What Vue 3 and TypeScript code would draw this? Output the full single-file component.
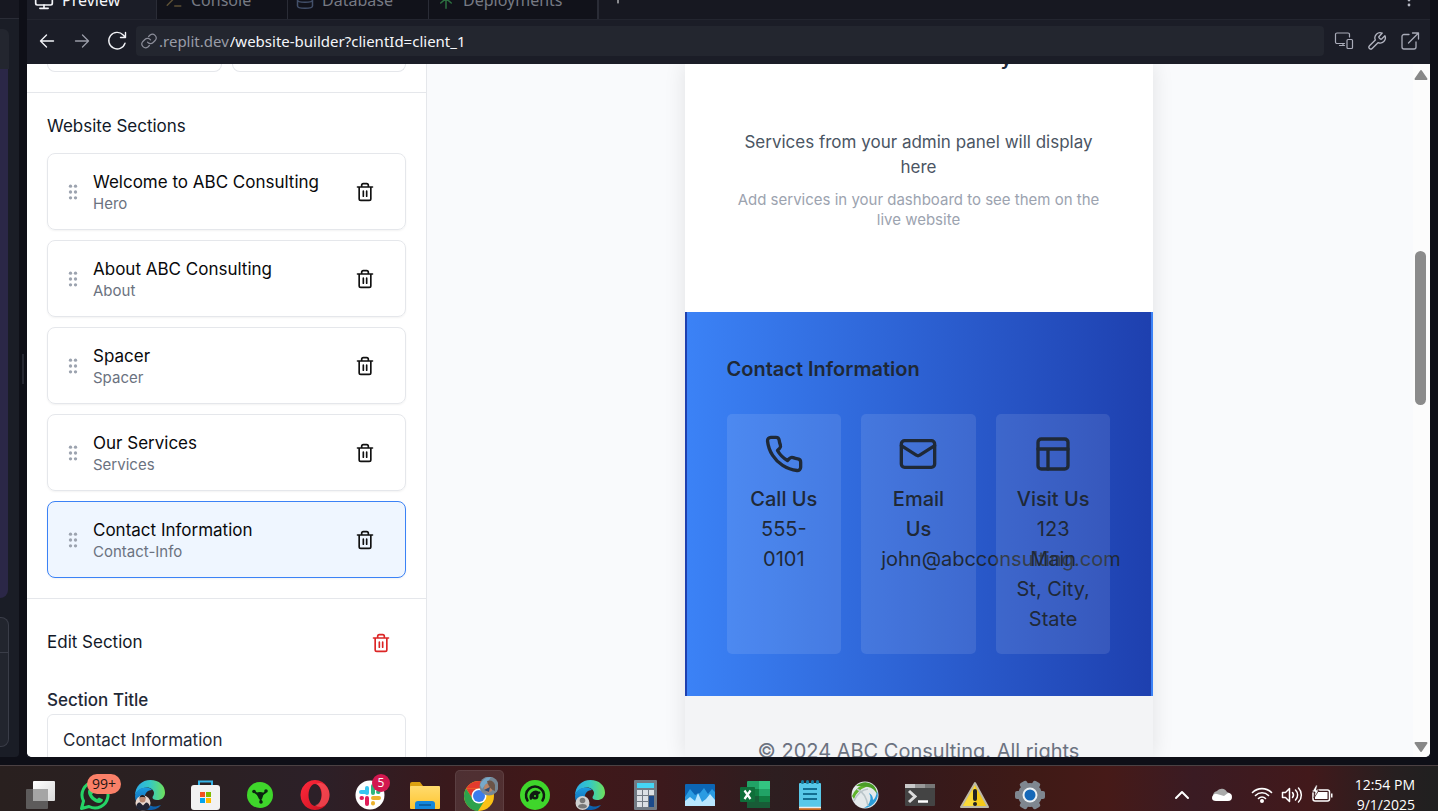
<script setup lang="ts">
import { ref } from 'vue'

interface Section {
  title: string
  kind: string
}

const sections: Section[] = [
  { title: 'Welcome to ABC Consulting', kind: 'Hero' },
  { title: 'About ABC Consulting', kind: 'About' },
  { title: 'Spacer', kind: 'Spacer' },
  { title: 'Our Services', kind: 'Services' },
  { title: 'Contact Information', kind: 'Contact-Info' },
]
const selected = ref(4)
const path = ref('/website-builder?clientId=client_1')
const sectionTitle = ref('Contact Information')
</script>

<template>
  <div class="desktop">
    <div class="workspace">
      <aside class="rail">
        <div class="rail-top"></div>
        <div class="rail-body">
          <div class="rail-head"></div>
          <div class="rail-chat"></div>
          <div class="rail-box"><div class="rail-line"></div></div>
        </div>
      </aside>
      <div class="gutter"><div class="handle"></div></div>

      <main class="pane">
        <nav class="tabs">
          <button class="tab active">
            <svg width="20" height="20" viewBox="0 0 24 24" class="ln"><rect x="2" y="3" width="20" height="15" rx="2" /><path d="M12 18v4M7 22h10" /></svg>
            Preview
          </button>
          <button class="tab console">
            <svg width="18" height="18" viewBox="0 0 24 24" class="ln" stroke="#5d5035"><path d="M3 19l7-7-7-7M13 20h8" /></svg>
            Console
          </button>
          <button class="tab database">
            <svg width="18" height="18" viewBox="0 0 24 24" class="ln" stroke="#43506a"><ellipse cx="12" cy="5" rx="10" ry="3" /><path d="M2 5v15c0 4 20 4 20 0V5M2 12c0 4 20 4 20 0" /></svg>
            Database
          </button>
          <button class="tab deploy">
            <svg width="18" height="18" viewBox="0 0 24 24" class="ln" stroke="#2d7040"><path d="M12 23V10M5 16l7-6 7 6M6 11l6-6 6 6" /></svg>
            Deployments
          </button>
          <button class="tab add" aria-label="New tab">
            <svg width="14" height="14" viewBox="0 0 14 14" class="ln" stroke="#fff" stroke-width="1"><path d="M7 1v12M1 7h12" /></svg>
          </button>
          <button class="more" aria-label="More">
            <svg width="6" height="18" viewBox="0 0 6 18"><g fill="#b8bac4"><circle cx="3" cy="4" r="1.4" /><circle cx="3" cy="9" r="1.4" /><circle cx="3" cy="14" r="1.4" /></g></svg>
          </button>
        </nav>

        <div class="toolbar">
          <button class="tool" aria-label="Back"><svg width="20" height="20" viewBox="0 0 20 20" class="ln" stroke="#f2f3f7" stroke-width="1.4"><path d="M16.500 10h-13M9.500 4L3.500 10l6 6" /></svg></button>
          <button class="tool" aria-label="Forward"><svg width="20" height="20" viewBox="0 0 20 20" class="ln" stroke="#9a9ca8" stroke-width="1.300"><path d="M3.500 10h13M10.500 4l6 6-6 6" /></svg></button>
          <button class="tool" aria-label="Reload"><svg width="22" height="22" viewBox="0 0 22 22" class="ln" stroke="#f2f3f7" stroke-width="1.400"><path d="M19 13.200a8.300 8.300 0 1 1-1.800-8.200l2.300 2.500M19.500 2.500v5h-5" /></svg></button>
          <div class="url">
            <svg width="18" height="18" viewBox="0 0 24 24" class="ln" stroke="#8c8e9a" stroke-width="1.600"><path d="M10 13.500a5 5 0 0 0 7.500.5l3-3a5 5 0 0 0-7-7l-2 2M14 10.500a5 5 0 0 0-7.500-.5l-3 3a5 5 0 0 0 7 7l2-2" /></svg>
            <span class="host">.replit.dev</span>
            <input v-model="path" class="path" aria-label="Path" />
          </div>
          <button class="tool" aria-label="Devices"><svg width="20" height="20" viewBox="0 0 20 20" class="ln" stroke="#a9abb8" stroke-width="1.200"><path d="M10.500 12.500H3a1.500 1.500 0 0 1-1.500-1.500V3.500A1.500 1.500 0 0 1 3 2h11a1.500 1.500 0 0 1 1.500 1.500V6M9 12.500v2M5.500 14.500h5" /><rect x="13" y="8.500" width="5.500" height="9" rx="1" /></svg></button>
          <button class="tool" aria-label="Tools"><svg width="20" height="20" viewBox="0 0 24 24" class="ln" stroke="#b4b6c2" stroke-width="1.600"><path d="M14.500 6.500a1.200 1.200 0 0 0 0 1.600l1.500 1.500a1.200 1.200 0 0 0 1.600 0l3.900-3.900a6.300 6.300 0 0 1-8.300 8.300l-7 7a2.200 2.200 0 0 1-3.200-3.200l7-7a6.300 6.300 0 0 1 8.300-8.300z" /></svg></button>
          <button class="tool" aria-label="Open in new tab"><svg width="20" height="20" viewBox="0 0 20 20" class="ln" stroke="#a9abb8" stroke-width="1.300"><path d="M9 3.500H4a2 2 0 0 0-2 2V16a2 2 0 0 0 2 2h10a2 2 0 0 0 2-2v-5M12.500 2h6v6M18.500 2L8.500 12" /></svg></button>
        </div>

        <div class="page">
          <aside class="sidebar">
            <div class="stubs"><div></div><div></div></div>
            <section class="block">
              <h3>Website Sections</h3>
              <ul>
                <li v-for="(s, i) in sections" :key="s.title" class="card" :class="{ on: i === selected }" @click="selected = i">
                  <svg width="20" height="20" viewBox="0 0 24 24" fill="#9ca3af"><g v-for="y in [5, 12, 19]" :key="y"><circle cx="9" :cy="y" r="2" /><circle cx="15" :cy="y" r="2" /></g></svg>
                  <div class="meta">
                    <div class="title">{{ s.title }}</div>
                    <div class="kind">{{ s.kind }}</div>
                  </div>
                  <button class="del" aria-label="Delete section"><svg width="20" height="20" viewBox="0 0 24 24" class="ln"><path d="M3 6h18M19 6v14a2 2 0 0 1-2 2H7a2 2 0 0 1-2-2V6M8 6V4a2 2 0 0 1 2-2h4a2 2 0 0 1 2 2v2M10 11v6M14 11v6" /></svg></button>
                </li>
              </ul>
            </section>
            <section class="block edit">
              <div class="edit-head">
                <h3>Edit Section</h3>
                <button class="del red" aria-label="Delete selected section"><svg width="20" height="20" viewBox="0 0 24 24" class="ln"><path d="M3 6h18M19 6v14a2 2 0 0 1-2 2H7a2 2 0 0 1-2-2V6M8 6V4a2 2 0 0 1 2-2h4a2 2 0 0 1 2 2v2M10 11v6M14 11v6" /></svg></button>
              </div>
              <label for="section-title">Section Title</label>
              <input id="section-title" v-model="sectionTitle" class="field" />
            </section>
          </aside>

          <div class="canvas">
            <div class="site">
              <section class="services">
                <div class="tail"><h2>y</h2></div>
                <p class="lead">Services from your admin panel will display here</p>
                <p class="note">Add services in your dashboard to see them on the live website</p>
              </section>
              <section class="contact">
                <h3>Contact Information</h3>
                <div class="grid">
                  <div class="info">
                    <svg width="40" height="40" viewBox="0 0 24 24" class="ln"><path d="M22 16.920v3a2 2 0 0 1-2.180 2 19.790 19.790 0 0 1-8.630-3.070 19.500 19.500 0 0 1-6-6 19.790 19.790 0 0 1-3.070-8.670A2 2 0 0 1 4.110 2h3a2 2 0 0 1 2 1.720 12.840 12.840 0 0 0 .7 2.810 2 2 0 0 1-.45 2.110L8.090 9.910a16 16 0 0 0 6 6l1.270-1.270a2 2 0 0 1 2.110-.45 12.840 12.840 0 0 0 2.810.7A2 2 0 0 1 22 16.920z" /></svg>
                    <h4>Call Us</h4>
                    <p>555-0101</p>
                  </div>
                  <div class="info">
                    <svg width="40" height="40" viewBox="0 0 24 24" class="ln"><rect x="2" y="4" width="20" height="16" rx="2" /><path d="M22 7l-8.970 5.700a1.940 1.940 0 0 1-2.060 0L2 7" /></svg>
                    <h4>Email Us</h4>
                    <p>john@abcconsulting.com</p>
                  </div>
                  <div class="info">
                    <svg width="40" height="40" viewBox="0 0 24 24" class="ln"><rect x="3" y="3" width="18" height="18" rx="2" /><path d="M3 9h18M9 21V9" /></svg>
                    <h4>Visit Us</h4>
                    <p>123 Main St, City, State</p>
                  </div>
                </div>
              </section>
              <footer>© 2024 ABC Consulting. All rights reserved.</footer>
            </div>
          </div>

          <div class="scroll">
            <svg width="14" height="12" viewBox="0 0 14 12"><path d="M7 2L12.500 10h-11z" fill="#888" stroke="#888" stroke-width="2" stroke-linejoin="round" /></svg>
            <div class="thumb"></div>
            <svg width="14" height="12" viewBox="0 0 14 12"><path d="M7 10L12.500 2h-11z" fill="#888" stroke="#888" stroke-width="2" stroke-linejoin="round" /></svg>
          </div>
        </div>
      </main>
    </div>

    <footer class="taskbar">
      <svg width="0" height="0" class="defs">
        <defs>
          <linearGradient id="edgeA" x1="0" y1="0" x2="1" y2="0"><stop offset="0" stop-color="#2aa9e8" /><stop offset=".5" stop-color="#35c9c4" /><stop offset="1" stop-color="#6ee05a" /></linearGradient>
          <linearGradient id="edgeB" x1="0" y1="0" x2="0" y2="1"><stop offset="0" stop-color="#1b9be0" /><stop offset="1" stop-color="#0c59a4" /></linearGradient>
          <linearGradient id="opera" x1="0" y1="0" x2="1" y2="1"><stop offset="0" stop-color="#ff2a3c" /><stop offset="1" stop-color="#c8101f" /></linearGradient>
          <linearGradient id="folder" x1="0" y1="0" x2="0" y2="1"><stop offset="0" stop-color="#ffdb6e" /><stop offset="1" stop-color="#ffc52f" /></linearGradient>
          <linearGradient id="pane" x1="0" y1="0" x2="1" y2="1"><stop offset="0" stop-color="#fff" /><stop offset="1" stop-color="#d8d8d8" /></linearGradient>
        </defs>
      </svg>
      <div class="apps">
        <button class="app" aria-label="Task view"><svg width="32" height="32" viewBox="0 0 32 32"><rect x="9" y="2" width="22" height="20" rx="1" fill="url(#pane)" /><rect x="2" y="10" width="22" height="20" rx="1" fill="#666" opacity=".85" /><rect x="9" y="10" width="15" height="12" fill="#a5a5a5" /></svg></button>
        <button class="app" aria-label="WhatsApp"><svg width="32" height="32" viewBox="0 0 32 32"><path d="M2.500 29.500l2-7.500A13 13 0 1 1 10 27.500z" fill="none" stroke="#25d366" stroke-width="3" stroke-linejoin="round" /><path d="M12 9l2.500 4.500-1.500 2q2 3.500 5 4.500l2-1.500 4 2c0 2-2 3.500-4 3.500-5 0-11-6-11-11 0-2 1-4 3-4z" fill="#25d366" /></svg><span class="badge">99+</span></button>
        <button class="app" aria-label="Edge"><svg width="32" height="32" viewBox="0 0 32 32"><path d="M1 17C1 7 8 1 16.500 1 25 1 31 6.500 31 13.500c0 5-3.500 7.500-8 7.500-3 0-4.500-1-4.500-2.500s1.500-2 1.500-4.500c0-3-3-5.500-7-5.500-6 0-11 4-12 8.500z" fill="url(#edgeA)" /><path d="M1 17c1-5 5-8.500 11-8.500 3 0 5 1 6 2.500-5 0-8 4-7 9 1 5 6 8 11 7.500l5-1.500c-3 4-7 5-11 5C7 31 1 25 1 17z" fill="url(#edgeB)" /><circle cx="9" cy="24" r="7.500" fill="#e8d7ce" /><circle cx="8.500" cy="20.500" r="3" fill="#b98870" /><path d="M5.500 20q0-4 3-4t3 4l-1-2h-4z" fill="#201b1c" /><path d="M2 28q1-5 4-4.500l3 3 3-3q3 0 4 4.500-3 4-7 3.500-5 0-7-3.500z" fill="#222433" /></svg></button>
        <button class="app" aria-label="Store"><svg width="32" height="32" viewBox="0 0 32 32"><path d="M10 7V2.500h13V7" fill="none" stroke="#35b4e8" stroke-width="2" /><rect x="2" y="6" width="29" height="25" rx="3" fill="#f2f2f2" /><rect x="11" y="13" width="5" height="5" fill="#f25022" /><rect x="17" y="13" width="5" height="5" fill="#7fba00" /><rect x="11" y="19" width="5" height="5" fill="#00a4ef" /><rect x="17" y="19" width="5" height="5" fill="#ffb900" /></svg></button>
        <button class="app" aria-label="Monitor"><svg width="32" height="32" viewBox="0 0 32 32"><circle cx="16" cy="16" r="13" fill="#3fd62b" /><path d="M16 17L10 12.500M16 17l6-4M16 17l1 6" stroke="#0b2410" stroke-width="2" /><path d="M12 14q4-2 8 0l-2 6h-3z" fill="#0b2410" /><circle cx="10" cy="12.500" r="1.800" fill="#0b2410" /><circle cx="22" cy="12" r="1.800" fill="#0b2410" /><circle cx="17" cy="23" r="1.800" fill="#0b2410" /></svg></button>
        <button class="app" aria-label="Opera"><svg width="32" height="32" viewBox="0 0 32 32"><path d="M16 1a14.500 15 0 1 0 .01 0zM16 5a6.500 11 0 1 1-.01 0z" fill="url(#opera)" fill-rule="evenodd" /><path d="M17 5c4-2 10-1 13 7 2 8-2 15-8 16-3 0-5-1-6-2 8-1 10-18 1-21z" fill="#ff6a6d" opacity=".5" /></svg></button>
        <button class="app" aria-label="Slack"><svg width="32" height="32" viewBox="0 0 32 32"><circle cx="16" cy="16" r="14.500" fill="#fff" /><g stroke-width="4" stroke-linecap="round"><path d="M13 9v5M7 13h6" stroke="#36c5f0" /><path d="M19 7v7M24 13h.5" stroke="#2eb67d" /><path d="M19 19h6M19 24v.5" stroke="#ecb22e" /><path d="M13 19v6M7.500 19H8" stroke="#e01e5a" /></g></svg><span class="badge round">5</span></button>
        <button class="app" aria-label="Files"><svg width="32" height="32" viewBox="0 0 32 32"><path d="M1 5q0-2 2-2h8l3 4v5H1z" fill="#dba111" /><rect x="1" y="7" width="30" height="23" rx="1" fill="url(#folder)" /><path d="M6 30v-5q0-3 3-3h14q3 0 3 3v5z" fill="#1386dc" /><path d="M10 26h12" stroke="#0b5593" stroke-width="1.500" /></svg></button>
        <button class="app current" aria-label="Chrome"><svg width="36" height="36" viewBox="-1 -3 36 36"><circle cx="16" cy="16" r="15" fill="#fbc116" /><path d="M3 8.500A15 15 0 0 1 29 8.500H16z" fill="#e33b2e" /><path d="M3 8.500L9.500 19l6.500-10.500z" fill="#e33b2e" /><path d="M3 8.500A15 15 0 0 0 15 31l6-9.500-11-2z" fill="#2da24c" /><circle cx="16" cy="16" r="7.500" fill="#fff" /><circle cx="16" cy="16" r="6" fill="#3b7ded" /><circle cx="26" cy="6" r="9.500" fill="#768795" /><path d="M17 5q3-8 11-8l-4 6-5 6z" fill="#76a9cb" /><path d="M21 9q0-6 5-5 4 1 3 7l-4 2z" fill="#b98568" /><path d="M24 1q6-2 8 4v6q-6-2-8-10z" fill="#6b5448" /><path d="M21 10l6-3-1 5z" fill="#2c4b77" /></svg></button>
        <button class="app" aria-label="Meter"><svg width="32" height="32" viewBox="0 0 32 32"><circle cx="16" cy="16" r="15" fill="#3fd62b" /><g fill="none" stroke="#101b12" stroke-linecap="round"><path d="M8.500 21.500a9 9 0 1 1 15 0" stroke-width="2.500" /><path d="M12 19.500a5 5 0 0 1 7-6" stroke-width="2.500" /></g><circle cx="16" cy="17" r="3.500" fill="#101b12" /><path d="M16 17l5-4" stroke="#101b12" stroke-width="2" /><circle cx="16" cy="17" r="1" fill="#3fd62b" /></svg></button>
        <button class="app" aria-label="Edge profile"><svg width="32" height="32" viewBox="0 0 32 32"><path d="M1 17C1 7 8 1 16.500 1 25 1 31 6.500 31 13.500c0 5-3.500 7.500-8 7.500-3 0-4.500-1-4.500-2.500s1.500-2 1.500-4.500c0-3-3-5.500-7-5.500-6 0-11 4-12 8.500z" fill="url(#edgeA)" /><path d="M1 17c1-5 5-8.500 11-8.500 3 0 5 1 6 2.500-5 0-8 4-7 9 1 5 6 8 11 7.500l5-1.500c-3 4-7 5-11 5C7 31 1 25 1 17z" fill="url(#edgeB)" /><circle cx="8.500" cy="24" r="7" fill="#d0d0d0" /><circle cx="8.500" cy="21.500" r="2.800" fill="#777" /><path d="M4 28q0-3 4.500-3t4.500 3q-4 3-9 0z" fill="#777" /></svg></button>
        <button class="app" aria-label="Calculator"><svg width="32" height="32" viewBox="0 0 32 32"><rect x="5" y="1" width="23" height="30" rx="1" fill="#727a84" /><rect x="8" y="4" width="17" height="5" fill="#45d5f5" /><g fill="#dce0e5"><rect x="8" y="11" width="5" height="5" /><rect x="14" y="11" width="5" height="5" /><rect x="20" y="11" width="5" height="5" /><rect x="8" y="17" width="5" height="5" /><rect x="14" y="17" width="5" height="5" /><rect x="8" y="23" width="5" height="5" /><rect x="14" y="23" width="5" height="5" /></g><rect x="20" y="17" width="5" height="11" fill="#1b4a8c" /></svg></button>
        <button class="app" aria-label="Performance"><svg width="32" height="32" viewBox="0 0 32 32"><rect x="1" y="5" width="30" height="22" rx="1" fill="#0c66b5" /><path d="M1 18l5-8 5 6 5-2 4-5 4 6 4-5 3 3v14H1z" fill="#2a9be2" /><path d="M1 22l5-4 5 4 3-8 4 9 4-3 4-5 5 6v6H1z" fill="#b9e6ff" /></svg></button>
        <button class="app" aria-label="Excel"><svg width="32" height="32" viewBox="0 0 32 32"><rect x="8" y="2" width="23" height="27" rx="1" fill="#21a366" /><rect x="20" y="2" width="11" height="8" fill="#33c481" /><path d="M8 10h12v7H8z" fill="#107c41" /><path d="M20 17h11v6H20z" fill="#107c41" /><path d="M8 17h12v6h11v6H8z" fill="#185c37" /><rect x="1" y="8" width="15" height="15" rx="1" fill="#0f6f3a" /><path d="M5.500 11.500l6 8.500M11.500 11.500l-6 8.500" stroke="#fff" stroke-width="2.200" /></svg></button>
        <button class="app" aria-label="Notepad"><svg width="32" height="32" viewBox="0 0 32 32"><rect x="5" y="27" width="22" height="4" fill="#c5671d" /><rect x="5" y="4" width="22" height="24" rx="1" fill="#58c8e8" /><path d="M5 28.500h22" stroke="#eee" stroke-width="1.500" /><path d="M9 10h14M9 15h14M9 20h14" stroke="#126e91" stroke-width="2" /><path d="M8.500 2.500v1M13.500 2.500v1M18.500 2.500v1M23.500 2.500v1" stroke="#17799c" stroke-width="3" stroke-linecap="round" /></svg></button>
        <button class="app" aria-label="Globe"><svg width="32" height="32" viewBox="0 0 32 32"><circle cx="16" cy="16" r="13.500" fill="#e4e9eb" /><path d="M3 17Q6 9 15 5.500l3 2Q8 11 5 20z" fill="#5fb32c" /><path d="M7 7q9-7 17-1 4 4 4 9-3-6-9-7-6-1-12-1z" fill="#4a9d27" /><path d="M20 14q4 6-2 13l-3 2q7 0 12-7 3-6 1-10-1 7-4 9 0-5-4-7z" fill="#2b9cd8" /><path d="M5 22q5-11 14-12M8 10q9 4 11 17" fill="none" stroke="#bac5c9" stroke-width="1.500" /></svg></button>
        <button class="app" aria-label="Terminal"><svg width="32" height="32" viewBox="0 0 32 32"><rect x="1" y="5" width="30" height="22" rx="1" fill="#444" /><path d="M1 5h10v4H1z" fill="#c9c9c9" /><path d="M11 5h10v4H11z" fill="#999" /><path d="M21 5h10v4H21z" fill="#777" /><path d="M5 12l6 5.500L5 23" fill="none" stroke="#ddd" stroke-width="3" /><path d="M14 22.500h10" stroke="#fff" stroke-width="2.500" /></svg></button>
        <button class="app" aria-label="Warning"><svg width="32" height="32" viewBox="0 0 32 32"><path d="M16 4l13 24H2z" fill="#f5ca19" stroke="#bdb9a7" stroke-width="2" stroke-linejoin="round" /><path d="M16 6L4 27h12z" fill="#ffe95a" opacity=".5" /><path d="M16 12v8" stroke="#222" stroke-width="4" stroke-linecap="round" /><circle cx="16" cy="25" r="2" fill="#222" /></svg></button>
        <button class="app" aria-label="Settings"><svg width="32" height="32" viewBox="0 0 32 32"><g fill="#7f8790"><rect v-for="a in [0, 60, 120]" :key="a" x="12" y="1" width="8" height="30" rx="2" :transform="`rotate(${a + 30} 16 16)`" /><circle cx="16" cy="16" r="12" /></g><circle cx="16" cy="16" r="7.500" fill="#eef2f5" /><circle cx="16" cy="16" r="5.500" fill="#1668b8" /></svg></button>
      </div>
      <div class="tray">
        <button class="tray-btn wide" aria-label="Hidden icons"><svg width="20" height="20" viewBox="0 0 20 20" class="ln" stroke="#fff"><path d="M4 13l6-6 6 6" /></svg></button>
        <button class="tray-btn wide" aria-label="Cloud"><svg width="22" height="22" viewBox="0 0 22 22"><path d="M3 15a5 5 0 0 1 3-8 6 6 0 0 1 10 1 5 5 0 0 1 3 8z" fill="#aaa" /><path d="M1 14a4 4 0 0 1 5-4l7 2 4-3a4 4 0 0 1 4 4q0 4-4 4H5q-4 0-4-3z" fill="#fff" /></svg></button>
        <button class="tray-btn net" aria-label="Network"><svg width="22" height="22" viewBox="0 0 22 22" class="ln" stroke="#fff" stroke-width="1.600"><path d="M1.500 8.500a13.500 13.500 0 0 1 19 0M4.500 11.500a9.200 9.200 0 0 1 13 0M7.500 14.500a5 5 0 0 1 7 0" /><circle cx="11" cy="17" r="1.200" fill="#fff" /></svg></button>
        <button class="tray-btn" aria-label="Volume"><svg width="22" height="22" viewBox="0 0 22 22" class="ln" stroke="#fff" stroke-width="1.500"><path d="M1.500 8.500h3l4-4v13l-4-4h-3zM11.500 8.500a4 4 0 0 1 0 5M14.500 6a7 7 0 0 1 0 10M17.500 4a10 10 0 0 1 0 14" /></svg></button>
        <button class="tray-btn" aria-label="Battery"><svg width="22" height="22" viewBox="0 0 22 22"><rect x="2" y="6" width="16.500" height="11" rx="2" fill="none" stroke="#fff" stroke-width="1.500" /><rect x="4" y="8" width="12.500" height="7" fill="#fff" /><path d="M20 9.500h1.500v4H20z" fill="#fff" /><path d="M5 1L1 8h3l-1 6 5-8H5.500l1-5z" fill="#fff" stroke="#3b1a1d" stroke-width=".8" /></svg></button>
        <div class="clock"><span>12:54 PM</span><span>9/1/2025</span></div>
      </div>
    </footer>
  </div>
</template>

<style>
body {
  margin: 0;
  overflow: hidden;
}
</style>

<style scoped>
* {
  box-sizing: border-box;
}
button {
  border: 0;
  padding: 0;
  background: none;
  font: inherit;
  color: inherit;
  cursor: pointer;
}
h2, h3, h4, p, ul {
  margin: 0;
  padding: 0;
  font-weight: 400;
}
svg {
  display: block;
  flex: none;
}
.ln {
  fill: none;
  stroke-linecap: round;
  stroke-linejoin: round;
}
.ln:not([stroke]) {
  stroke: currentColor;
}
.ln:not([stroke-width]) {
  stroke-width: 2;
}
.desktop {
  height: 100vh;
  display: flex;
  flex-direction: column;
  background: #0e0f17;
  font-family: Inter, "Liberation Sans", sans-serif;
  overflow: hidden;
}
.workspace {
  flex: 1;
  min-height: 0;
  display: flex;
  padding: 0 8px 8px 0;
}
.rail {
  width: 19px;
  display: flex;
  flex-direction: column;
}
.rail-top {
  height: 19px;
  background: #171821;
  border-bottom: 1px solid #2a2c36;
}
.rail-body {
  flex: 1;
  display: flex;
  flex-direction: column;
  padding: 10px 10px 10px 0;
  background: #1a1d26;
  border-radius: 0 0 4px 0;
}
.rail-head {
  height: 40px;
  background: #23262f;
  border-radius: 0 6px 0 0;
}
.rail-chat {
  flex: 1;
  width: 8px;
  background: #2b2747;
  border-radius: 0 0 8px 0;
}
.rail-box {
  height: 130px;
  margin-top: 19px;
  padding-top: 34px;
  background: #22252e;
  border: 1px solid #3a3d48;
  border-left: 0;
  border-radius: 0 8px 8px 0;
}
.rail-line {
  border-top: 1px solid #3a3d48;
}
.gutter {
  width: 8px;
  display: flex;
  align-items: center;
  justify-content: center;
  padding-bottom: 20px;
}
.handle {
  width: 2px;
  height: 30px;
  background: #252731;
}
.pane {
  flex: 1;
  min-width: 0;
  display: flex;
  flex-direction: column;
  background: #1b1d27;
}
.tabs {
  height: 19px;
  display: flex;
  align-items: flex-end;
  overflow: hidden;
  background: #171821;
  font: 16px/20px "Noto Sans", sans-serif;
  color: #777a84;
}
.tab {
  flex: none;
  height: 38px;
  display: flex;
  align-items: center;
  gap: 8px;
  padding: 0 8px;
  background: #11121a;
  border-right: 1px solid #2a2c36;
}
.tab.active {
  width: 130px;
  padding: 0 7px;
  background: #1b1d27;
  color: #f5f6fa;
}
.tab.console {
  width: 131px;
}
.tab.database {
  width: 141px;
}
.tab.deploy {
  width: 170px;
  border-right-width: 2px;
}
.tab.add {
  background: none;
  border: 0;
  padding: 0 12px 6px;
}
.more {
  height: 38px;
  margin-left: auto;
  padding: 0 18px;
}
.toolbar {
  height: 45px;
  display: flex;
  align-items: center;
  padding: 0 4px 2px 2px;
  border-top: 1px solid #23252f;
}
.tool {
  width: 33px;
  height: 30px;
  display: flex;
  align-items: center;
  justify-content: center;
}
.tool:nth-child(-n + 3) {
  width: 35px;
}
.url {
  flex: 1;
  height: 30px;
  display: flex;
  align-items: center;
  margin: 0 3px 0 2px;
  padding: 0 4px;
  background: #23262f;
  border-radius: 4px;
  font: 15px/20px "Noto Sans", sans-serif;
}
.host {
  padding-left: 1px;
  color: #999ca7;
}
.path {
  flex: 1;
  border: 0;
  padding: 0 0 0 1px;
  background: none;
  font: inherit;
  color: #f5f6fa;
  outline: 0;
}
.page {
  flex: 1;
  min-height: 0;
  display: flex;
  overflow: hidden;
  background: #f9fafb;
  border-radius: 0 0 5px 5px;
}
.sidebar {
  width: 400px;
  flex: none;
  background: #fff;
  border-right: 1px solid #e5e7eb;
  overflow: hidden;
}
.stubs {
  height: 28px;
  display: flex;
  align-items: flex-start;
  gap: 10px;
  padding: 0 20px;
}
.stubs div {
  flex: 1;
  height: 8px;
  border: 1px solid #e5e7eb;
  border-top: 0;
  border-radius: 0 0 8px 8px;
}
.block {
  padding: 21px 20px 20px;
  border-top: 1px solid #e5e7eb;
}
h3 {
  font-size: 17px;
  line-height: 25px;
  color: #111827;
}
ul {
  display: flex;
  flex-direction: column;
  gap: 10px;
  margin-top: 14px;
}
.card {
  min-height: 77px;
  display: flex;
  align-items: center;
  gap: 10px;
  padding: 0 15px;
  border: 1px solid #e5e7eb;
  border-radius: 8px;
  box-shadow: 0 1px 2px rgb(0 0 0 / 5%);
}
.card.on {
  background: #eff6ff;
  border-color: #3b82f6;
}
.meta {
  flex: 1;
  padding-top: 1px;
}
.title {
  font-size: 17px;
  line-height: 23px;
  color: #09090b;
}
.kind {
  font-size: 15px;
  line-height: 20px;
  color: #6b7280;
}
.del {
  padding: 10px 15px;
  color: #111;
}
.del.red {
  color: #dc2626;
}
.edit-head {
  display: flex;
  align-items: center;
  justify-content: space-between;
  height: 45px;
  margin-bottom: 23px;
}
label {
  display: block;
  font-size: 17px;
  line-height: 25px;
  font-weight: 500;
  color: #1f2937;
}
.field {
  display: block;
  width: 100%;
  height: 52px;
  margin-top: 1px;
  padding: 0 15px;
  border: 1px solid #e5e7eb;
  border-radius: 6px;
  background: #fff;
  font: 17px/25px Inter, sans-serif;
  color: #1f2937;
}
.canvas {
  flex: 1;
  display: flex;
  justify-content: center;
  background: #f9fafc;
  overflow: hidden;
}
.site {
  width: 468px;
  background: #fff;
  box-shadow: 0 0 20px rgb(0 0 0 / 10%);
}
.services {
  height: 248px;
  padding: 0 50px;
  text-align: center;
}
.tail {
  height: 66px;
  padding-left: 176px;
  display: flex;
  justify-content: center;
}
.tail h2 {
  margin-top: -18px;
  font-size: 20px;
  line-height: 24px;
  font-weight: 600;
  color: #1f2937;
}
.lead {
  font-size: 17px;
  line-height: 25px;
  color: #4b5563;
}
.note {
  margin-top: 10px;
  font-size: 15px;
  line-height: 20px;
  color: #9ca3af;
}
.contact {
  padding: 40px;
  border: 2px solid transparent;
  background: linear-gradient(90deg, #3b82f6, #1e40af);
  color: #1f2937;
}
.contact h3 {
  font-size: 20px;
  line-height: 30px;
  font-weight: 600;
  color: inherit;
}
.grid {
  display: grid;
  grid-template-columns: repeat(3, minmax(0, 1fr));
  gap: 20px;
  margin-top: 30px;
}
.info {
  isolation: isolate;
  padding: 20px;
  border-radius: 5px;
  background: rgb(255 255 255 / 10%);
  text-align: center;
  font-size: 20px;
  line-height: 30px;
}
.info svg {
  margin: 0 auto 10px;
}
.info h4 {
  font-weight: 500;
}
.site footer {
  height: 100px;
  padding: 40px 60px;
  background: #f3f4f6;
  text-align: center;
  font-size: 20px;
  line-height: 30px;
  color: #6b7280;
}
.scroll {
  width: 20px;
  display: flex;
  flex-direction: column;
  align-items: center;
  justify-content: space-between;
  padding: 5px 2px 4px 3px;
  background: linear-gradient(90deg, #f9fafc 3px, #fcfcfc 3px);
}
.thumb {
  width: 11px;
  height: 154px;
  margin-bottom: 166px;
  border-radius: 6px;
  background: #8b8b8b;
}
.taskbar {
  height: 46px;
  flex: none;
  display: flex;
  justify-content: space-between;
  overflow: hidden;
  border-top: 1px solid #4b4143;
  background: linear-gradient(90deg, #29201f 0%, #2b2023 15%, #2c2028 22%, #39191c 31%, #411819 38%, #3c191c 46%, #2d1e20 54%, #33191c 62%, #3f1a16 72%, #461a18 77%, #3a1b23 83%, #42191b 91%, #261f20 97%, #202020 100%);
}
.defs {
  position: absolute;
}
.apps, .tray {
  display: flex;
  height: 58px;
  align-items: center;
}
.apps {
  padding-left: 12px;
}
.app {
  position: relative;
  width: 49px;
  height: 50px;
  margin: 0 3px;
  display: grid;
  place-items: center;
  border-radius: 5px;
}
.current {
  background: rgb(255 255 255 / 10%);
  border: 1px solid rgb(255 255 255 / 8%);
}
.badge {
  position: absolute;
  left: 17px;
  top: 4px;
  height: 20px;
  padding: 0 5px;
  border-radius: 10px;
  background: #fa8068;
  color: #241514;
  font: 14px/20px "Open Sans", sans-serif;
}
.badge.round {
  left: 27px;
  width: 18px;
  height: 18px;
  padding: 0;
  background: #d3184f;
  color: #fff;
  font-size: 12px;
  line-height: 18px;
}
.tray {
  padding-right: 15px;
}
.tray-btn {
  width: 30px;
  display: grid;
  place-items: center;
}
.tray-btn.wide {
  width: 40px;
}
.tray-btn.net {
  margin-left: 5px;
}
.clock {
  display: flex;
  flex-direction: column;
  width: 78px;
  margin-right: 8px;
  text-align: right;
  font: 14px/20px "Open Sans", sans-serif;
  color: #fff;
}
</style>
